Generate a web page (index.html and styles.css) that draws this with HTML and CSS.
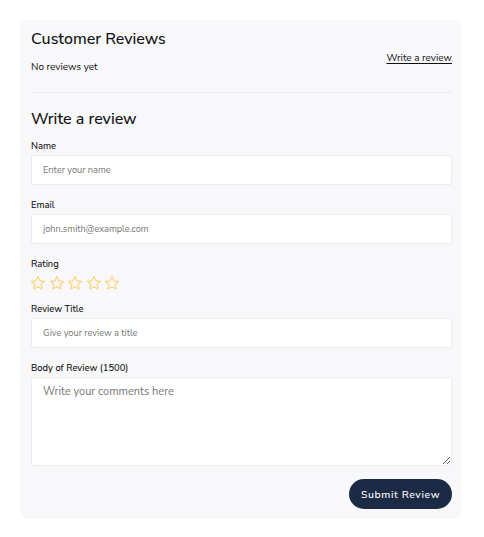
FILE: index.html
```html
<!DOCTYPE html>
<html lang="en">
<head>
<meta charset="utf-8">
<title>Customer Reviews</title>
<link rel="stylesheet" href="styles.css">
</head>
<body>
<div class="page">
  <section class="card">
    <div class="summary">
      <div class="summary-left">
        <h2 class="title">Customer Reviews</h2>
        <p class="empty">No reviews yet</p>
      </div>
      <a class="write-link" href="#">Write a review</a>
    </div>
    <hr class="divider">
    <form class="form">
      <h2 class="title form-title">Write a review</h2>
      <label class="field">
        <span class="label">Name</span>
        <input class="input" type="text" placeholder="Enter your name">
      </label>
      <label class="field">
        <span class="label">Email</span>
        <input class="input" type="email" placeholder="john.smith@example.com">
      </label>
      <div class="field field-rating">
        <span class="label">Rating</span>
        <div class="stars">
          <svg class="star" viewBox="2.2 2 19.6 19"><path d="M12 2.8l2.8 6 6.5.7-4.9 4.4 1.4 6.4L12 17l-5.8 3.3 1.4-6.4-4.9-4.4 6.5-.7z"/></svg>
          <svg class="star" viewBox="2.2 2 19.6 19"><path d="M12 2.8l2.8 6 6.5.7-4.9 4.4 1.4 6.4L12 17l-5.8 3.3 1.4-6.4-4.9-4.4 6.5-.7z"/></svg>
          <svg class="star" viewBox="2.2 2 19.6 19"><path d="M12 2.8l2.8 6 6.5.7-4.9 4.4 1.4 6.4L12 17l-5.8 3.3 1.4-6.4-4.9-4.4 6.5-.7z"/></svg>
          <svg class="star" viewBox="2.2 2 19.6 19"><path d="M12 2.8l2.8 6 6.5.7-4.9 4.4 1.4 6.4L12 17l-5.8 3.3 1.4-6.4-4.9-4.4 6.5-.7z"/></svg>
          <svg class="star" viewBox="2.2 2 19.6 19"><path d="M12 2.8l2.8 6 6.5.7-4.9 4.4 1.4 6.4L12 17l-5.8 3.3 1.4-6.4-4.9-4.4 6.5-.7z"/></svg>
        </div>
      </div>
      <label class="field">
        <span class="label">Review Title</span>
        <input class="input" type="text" placeholder="Give your review a title">
      </label>
      <label class="field">
        <span class="label">Body of Review (1500)</span>
        <textarea class="input textarea" placeholder="Write your comments here"></textarea>
      </label>
      <div class="actions">
        <button class="submit" type="button">Submit Review</button>
      </div>
    </form>
  </section>
</div>
</body>
</html>
```
FILE: styles.css
```css
* { box-sizing: border-box; }
html, body { margin: 0; background: #ffffff; }
body {
  font-family: "Nunito Sans", "Nunito", "Lato", sans-serif;
  color: #1a1a1a;
}
.page { padding: 20px 23px 18px 20px; }
.card {
  background: #f8f8fa;
  border-radius: 8px;
  padding: 8px 9px 10px 11px;
}
.summary {
  display: flex;
  justify-content: space-between;
  align-items: flex-end;
  padding-bottom: 17px;
}
.title {
  margin: 0;
  font-size: 16px;
  font-weight: 500;
  line-height: 22px;
  color: #111;
}
.empty {
  margin: 10px 0 0;
  font-size: 10px;
  line-height: 15px;
  color: #111;
}
.write-link {
  font-size: 10px;
  line-height: 14px;
  color: #111;
  text-decoration: underline;
  text-underline-offset: 2px;
  margin-bottom: 10px;
}
.divider {
  border: 0;
  border-top: 1px solid #ececef;
  margin: 0;
}
.form {
  display: flex;
  flex-direction: column;
  padding-top: 15px;
}
.form-title { margin-bottom: 9px; }
.field {
  display: flex;
  flex-direction: column;
  gap: 2px;
  margin-bottom: 13px;
}
.field-rating { gap: 4px; margin-bottom: 11px; }
.label {
  font-size: 9.4px;
  line-height: 14px;
  font-weight: 500;
  color: #111;
}
.input {
  height: 30px;
  border: 1px solid #ececef;
  border-radius: 2px;
  background: #fff;
  padding: 0 11px;
  font-family: inherit;
  font-size: 9.2px;
  color: #333;
  outline: none;
}
.input::placeholder { color: #777; }
.textarea {
  height: 89px;
  padding: 6px 11px;
  font-size: 11px;
  line-height: 15px;
  resize: vertical;
}
.stars {
  display: flex;
  align-items: center;
  gap: 4.5px;
  height: 16px;
}
.star {
  width: 14px;
  height: 13.5px;
  flex: none;
  fill: none;
  stroke: #fbd47c;
  stroke-width: 1.7;
  stroke-linejoin: round;
  overflow: visible;
}
.actions {
  display: flex;
  justify-content: flex-end;
}
.submit {
  background: #1b2a45;
  color: #fff;
  border: 0;
  border-radius: 15px;
  height: 30px;
  width: 103px;
  padding: 0;
  font-family: inherit;
  font-size: 10.5px;
  font-weight: 500;
  letter-spacing: 0.6px;
}
```
